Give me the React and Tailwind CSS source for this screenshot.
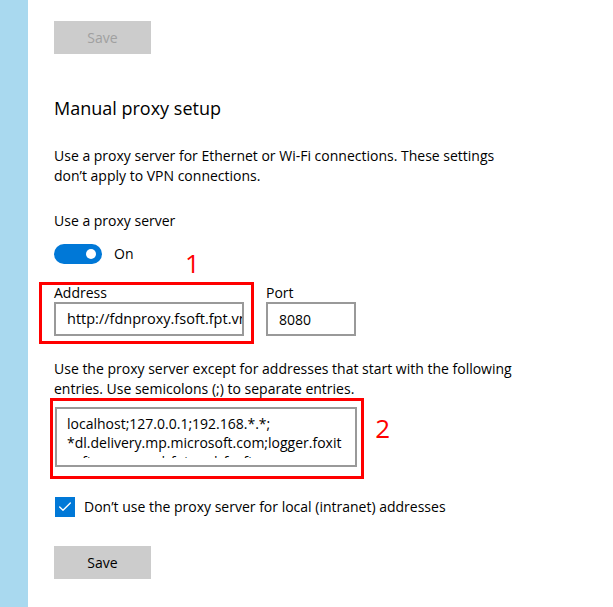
import { Check } from 'lucide-react';

const font = { fontFamily: '"Segoe UI", "Open Sans", "Noto Sans", sans-serif' };

function SaveButton({ disabled }) {
  return (
    <button
      className={`w-[97px] h-[33px] bg-[#cccccc] text-[14px] ${disabled ? 'text-[#a0a0a0]' : 'text-black'}`}
    >
      Save
    </button>
  );
}

function Toggle() {
  return (
    <div className="flex items-center mt-[12px]">
      <div className="w-[48px] h-[20px] rounded-full bg-[#0078d7] flex items-center justify-end pr-[6px]">
        <div className="w-[10px] h-[10px] rounded-full bg-white" />
      </div>
      <span className="ml-[12px] text-[14px] text-black">On</span>
    </div>
  );
}

export default function App() {
  return (
    <div className="flex w-[613px] h-[607px] bg-white overflow-hidden" style={font}>
      {/* left rail */}
      <div className="w-[28px] shrink-0 bg-[#a9d9ef]" />

      <div className="flex-1 pl-[26px] pt-[21px] text-black">
        <SaveButton disabled />

        <h2 className="mt-[40px] text-[18px] leading-[28px] text-black">Manual proxy setup</h2>

        <p className="mt-[24px] text-[14px] leading-[20px] w-[465px]">
          Use a proxy server for Ethernet or Wi-Fi connections. These settings don’t apply to VPN connections.
        </p>

        <p className="mt-[25px] text-[14px] leading-[20px]">Use a proxy server</p>

        <Toggle />

        {/* address + port */}
        <div className="flex mt-[20px] gap-[22px]">
          <div className="relative">
            <div className="absolute -left-[15px] -top-[2px] w-[215px] h-[62px] border-[3px] border-[#ff0000] pointer-events-none" />
            <span className="absolute left-[131px] -top-[36px] text-[26px] leading-[30px] text-[#ff0000]">1</span>
            <div className="text-[14px] leading-[18px]">Address</div>
            <div className="w-[190px] h-[34px] border-2 border-[#999999] px-[11px] flex items-center text-[14.5px] overflow-hidden whitespace-nowrap">
              http://fdnproxy.fsoft.fpt.vn
            </div>
          </div>
          <div>
            <div className="text-[14px] leading-[18px]">Port</div>
            <div className="w-[90px] h-[34px] border-2 border-[#999999] px-[11px] flex items-center text-[14px]">
              8080
            </div>
          </div>
        </div>

        <p className="mt-[23px] text-[14px] leading-[20px] w-[500px]">
          Use the proxy server except for addresses that start with the following entries. Use semicolons (;) to separate entries.
        </p>

        {/* exceptions */}
        <div className="relative mt-[8px] ml-[1px] w-[302px]">
          <div className="absolute -left-[5px] -top-[9px] -right-[7px] -bottom-[12px] border-[3px] border-[#ff0000] pointer-events-none" />
          <span className="absolute -right-[33px] top-[6px] text-[26px] leading-[30px] text-[#ff0000]">2</span>
          <div className="h-[60px] border-2 border-[#999999] pl-[10px] pt-[5px] text-[14px] leading-[19px]">
            <div className="h-[44px] overflow-hidden">
              <div className="whitespace-nowrap">localhost;127.0.0.1;192.168.*.*;</div>
              <div className="whitespace-nowrap">*dl.delivery.mp.microsoft.com;logger.foxit</div>
              <div className="whitespace-nowrap">software.com;*.fpt.vn;*.fsoft.com.vn;</div>
            </div>
          </div>
        </div>

        <label className="flex items-center mt-[30px] ml-[1px]">
          <span className="w-[20px] h-[20px] bg-[#0078d7] flex items-center justify-center">
            <Check className="w-[16px] h-[16px] text-white" strokeWidth={2} />
          </span>
          <span className="ml-[9px] text-[14px] leading-[20px]">
            Don’t use the proxy server for local (intranet) addresses
          </span>
        </label>

        <div className="mt-[29px]">
          <SaveButton />
        </div>
      </div>
    </div>
  );
}
